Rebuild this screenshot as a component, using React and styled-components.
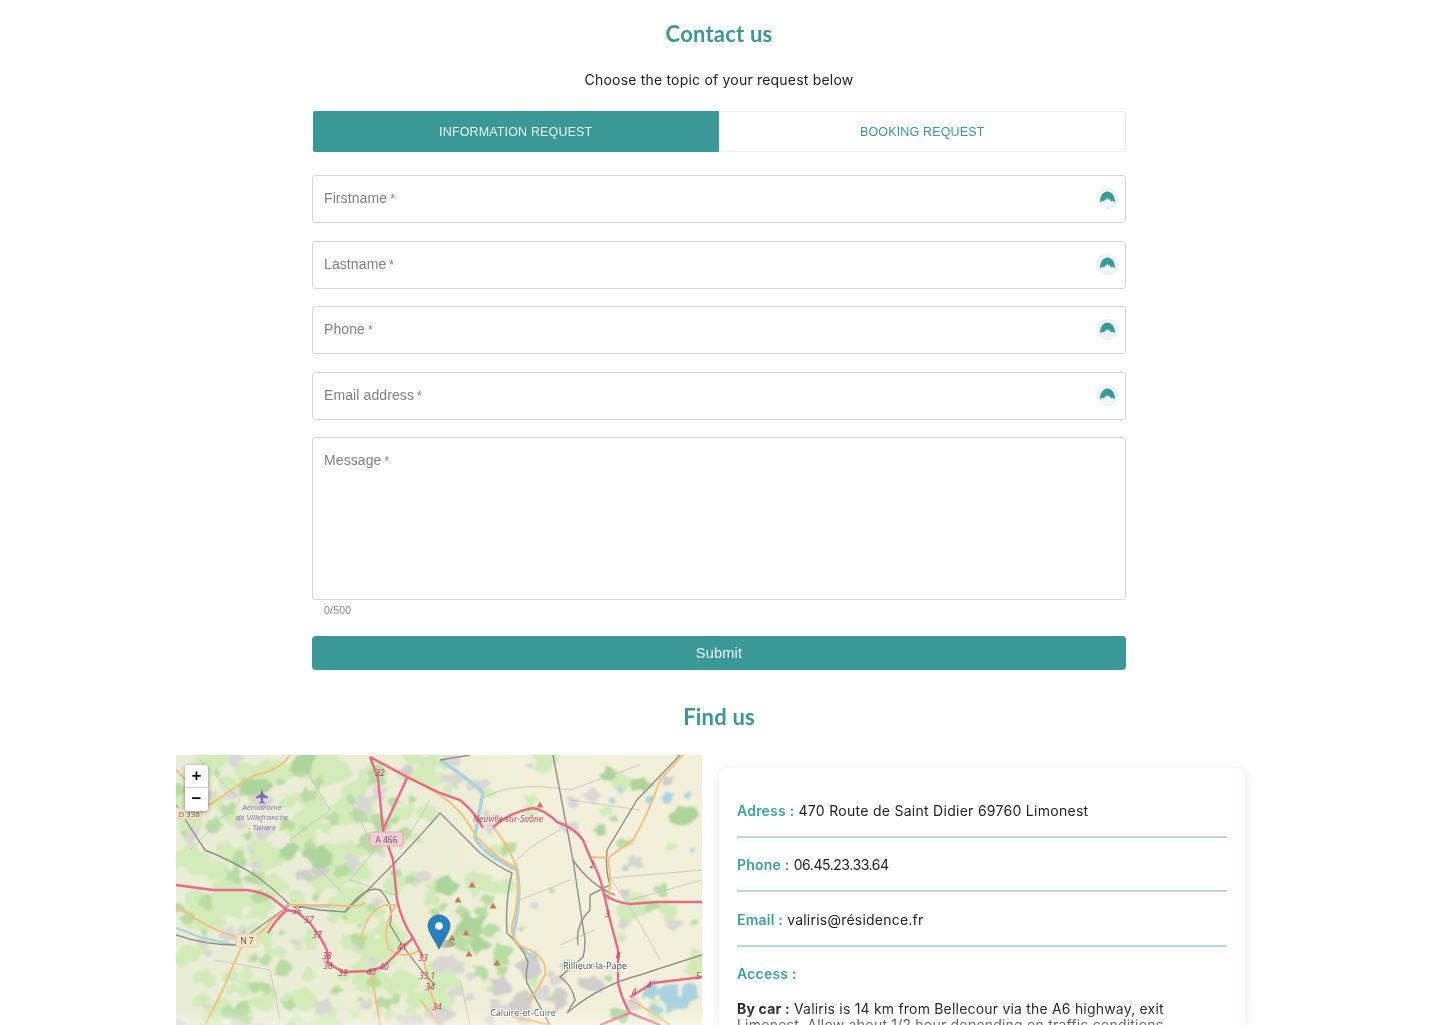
import React from 'react';
import styled, { createGlobalStyle } from 'styled-components';

const teal = '#3a9896';

const GlobalStyle = createGlobalStyle`
  html, body {
    margin: 0;
    padding: 0;
    background: #fff;
  }
  #root {
    height: 1025px;
    overflow: hidden;
  }
`;

const Page = styled.div`
  position: relative;
  height: 1025px;
  overflow: hidden;
  display: flex;
  flex-direction: column;
  align-items: center;
  padding: 20px 2px 0 0;
  box-sizing: border-box;
  font-family: 'Inter', sans-serif;
  filter: blur(0.3px);
  & > * {
    flex: none;
  }
`;

const Heading = styled.h2`
  margin: 0;
  height: 28px;
  line-height: 28px;
  font-family: 'Lato', sans-serif;
  font-size: 22px;
  font-weight: 700;
  letter-spacing: 0.2px;
  color: ${teal};
  text-align: center;
`;

const Subtitle = styled.p`
  margin: 21px 0 0;
  height: 22px;
  line-height: 22px;
  font-size: 14px;
  letter-spacing: 0.2px;
  color: #222;
`;

const Tabs = styled.div`
  display: flex;
  width: 813px;
  height: 41px;
  margin-top: 20px;
`;

const Tab = styled.button`
  flex: 1;
  padding: 0;
  font-family: 'Liberation Sans', sans-serif;
  font-size: 12.5px;
  letter-spacing: 0.15px;
  color: ${(p) => (p.$active ? '#e8f4f3' : teal)};
  background: ${(p) => (p.$active ? teal : '#fff')};
  border: 1px solid ${(p) => (p.$active ? teal : '#eeeeee')};
  border-radius: ${(p) => (p.$active ? '2px 0 0 2px' : '0 2px 2px 0')};
`;

const Form = styled.form`
  display: flex;
  flex-direction: column;
  gap: 17.6px;
  width: 814px;
  margin-top: 23px;
`;

const Field = styled.div`
  display: flex;
  align-items: ${(p) => (p.$multi ? 'flex-start' : 'center')};
  justify-content: space-between;
  height: ${(p) => (p.$multi ? '163px' : '48px')};
  padding: ${(p) => (p.$multi ? '14px 7px 0 11px' : '0 7px 1px 11px')};
  box-sizing: border-box;
  border: 1px solid #d6d6d6;
  border-radius: 3px;
`;

const Label = styled.span`
  font-family: 'Liberation Sans', sans-serif;
  font-size: 14px;
  line-height: 16px;
  letter-spacing: 0.1px;
  color: #808080;
`;

const Star = styled.span`
  margin-left: 3px;
  font-size: 12px;
`;

const Counter = styled.div`
  margin: -14px 0 0 12px;
  height: 12px;
  line-height: 12px;
  font-family: 'Liberation Sans', sans-serif;
  font-size: 10.5px;
  letter-spacing: 0.2px;
  color: #8a8a8a;
`;

const Submit = styled.button`
  height: 34px;
  margin-top: 2px;
  padding: 0;
  border: 0;
  border-radius: 4px;
  background: ${teal};
  color: #f2f8f8;
  font-family: 'Liberation Sans', sans-serif;
  font-size: 14.5px;
  letter-spacing: 0.2px;
`;

const FindHeading = styled(Heading)`
  margin-top: 33px;
`;

const Columns = styled.div`
  display: grid;
  grid-template-columns: 526px 526px;
  column-gap: 17px;
  align-self: flex-start;
  margin: 24px 0 0 176px;
`;

const MapBox = styled.div`
  position: relative;
  width: 526px;
  height: 300px;
  overflow: hidden;
  background: #f2efd9;
`;

const MapSvg = styled.svg`
  display: block;
  width: 526px;
  height: 300px;
  filter: blur(0.4px);
`;

const Zoom = styled.div`
  position: absolute;
  top: 10px;
  left: 9px;
  width: 23px;
  display: flex;
  flex-direction: column;
  border-radius: 3px;
  background: #fff;
  box-shadow: 0 1px 4px rgba(0, 0, 0, 0.4);
`;

const ZoomButton = styled.span`
  height: 22.5px;
  line-height: 22px;
  text-align: center;
  font-family: 'Liberation Sans', sans-serif;
  font-size: 17px;
  font-weight: 700;
  color: #111;
  & + & {
    border-top: 1px solid #ccc;
  }
`;

const Card = styled.div`
  margin-top: 13px;
  padding: 24px 18px 0;
  height: 300px;
  box-sizing: border-box;
  background: #fff;
  border-radius: 8px;
  box-shadow: 0 2px 10px rgba(30, 80, 80, 0.14);
`;

const Row = styled.div`
  height: 46px;
  padding-top: 8px;
  box-sizing: border-box;
  line-height: 22px;
  font-size: 14px;
  color: #222;
  letter-spacing: 0.22px;
  border-bottom: ${(p) => (p.$plain ? 'none' : '2px solid #b4dcdc')};
  margin-bottom: ${(p) => (p.$plain ? '0' : '8.5px')};
`;

const Key = styled.span`
  font-weight: 600;
  color: #3fa09d;
`;

const Value = styled.span`
  letter-spacing: ${(p) => p.$spacing || '0.22px'};
`;

const Paragraph = styled.p`
  margin: 0;
  font-size: 14px;
  line-height: 16px;
  letter-spacing: 0.2px;
  color: #222;
`;

const Fade = styled.div`
  position: absolute;
  left: 0;
  right: 0;
  bottom: 0;
  height: 18px;
  background: linear-gradient(rgba(255, 255, 255, 0), rgba(255, 255, 255, 0.35));
  pointer-events: none;
`;

const rnd = (seed) => {
  const n = Math.sin(seed * 12.9898) * 43758.5453;
  return n - Math.floor(n);
};

// irregular patch for the map, same seed gives the same shape
const blob = (cx, cy, r, seed) => {
  const pts = [];
  for (let i = 0; i < 10; i++) {
    const a = (i / 10) * Math.PI * 2;
    const k = 0.5 + rnd(seed * 3.1 + i * 7.7) * 0.9;
    pts.push(`${(cx + Math.cos(a) * r * k).toFixed(1)},${(cy + Math.sin(a) * r * k * 0.85).toFixed(1)}`);
  }
  return pts.join(' ');
};

// scatter of small fields, more of them on the western half of the map
const scatter = (count, seed, minR, maxR, keep) => {
  const out = [];
  for (let i = 0; i < count; i++) {
    const x = 176 + rnd(seed + i * 1.37) * 526;
    const y = 755 + rnd(seed + i * 2.71) * 280;
    if (keep(x, y, rnd(seed + i * 4.13))) {
      out.push([x, y, minR + rnd(seed + i * 5.9) * (maxR - minR)]);
    }
  }
  return out;
};

const fields2 = scatter(320, 11, 5, 17, (x, y, p) => (x < 450 ? p < 0.85 : p < 0.16));
const woods = scatter(260, 23, 3, 10, (x, y, p) => {
  if (x > 430 && x < 510 && y > 880 && y < 980) return p < 0.95;
  if (x < 400) return p < 0.6;
  return p < 0.1;
});
const towns = scatter(240, 37, 3, 10, (x, y, p) => {
  if (y > 960 && x > 430 && x < 620) return p < 0.95;
  if (x < 430) return p < 0.45;
  return p < 0.18;
});

const forestBig = [
  [255, 785, 14], [305, 762, 14], [318, 855, 13], [290, 850, 9], [445, 885, 12], [470, 925, 16], [480, 945, 10],
  [610, 775, 9], [642, 785, 10], [682, 815, 13], [600, 830, 6], [620, 1015, 9],
];

const townsBig = [
  [320, 870, 9], [305, 875, 8], [405, 772, 8], [530, 965, 14], [500, 985, 12], [520, 1005, 16], [560, 1000, 12],
  [590, 985, 12], [445, 1015, 12], [668, 780, 7], [625, 893, 6], [570, 965, 8],
];

const water = [
  [668, 797, 6], [650, 800, 5], [688, 795, 4], [612, 800, 4], [620, 790, 4], [692, 850, 3],
  [625, 868, 3], [650, 992, 12], [672, 1000, 14], [690, 992, 9], [655, 1010, 8],
];

const motorways = [
  'M176 885 L213 890 L247 890 Q262 892 272 898 L287 910',
  'M287 910 Q277 918 268 933',
  'M287 910 L297 912 L310 923 L320 937 L327 950 L328 963 L343 972 L370 971 L383 967 L403 947 L413 938',
  'M370 757 L407 777 L440 793 L460 800 Q475 812 483 828',
  'M378 778 L383 830 L407 778',
  'M378 778 L370 757',
  'M383 830 L393 860 L397 900 Q402 922 413 938 L423 957',
  'M493 827 Q510 812 533 808 Q545 810 557 822 Q575 828 583 840 L590 857 Q600 875 603 890 L610 920 L618 950 L618 983 Q622 1000 630 1013',
  'M603 893 Q612 902 630 904 L657 902 L702 902',
  'M630 997 L653 983 L702 977',
  'M600 1025 L630 1013 L660 1025',
];

const orangeRoads = [
  'M176 905 Q200 925 230 935 L245 940 Q262 935 272 920 L287 908',
  'M245 940 Q235 960 225 985 L205 1025',
  'M176 770 L210 805 Q230 790 255 775 Q280 770 290 755',
  'M423 957 L430 990 L437 1010',
  'M370 757 L400 772 L440 795 Q462 810 472 830 Q490 855 517 868',
  'M493 827 Q508 845 517 868 Q520 900 512 925 Q510 945 530 950 Q548 960 545 975 Q535 995 528 1000',
  'M608 858 Q612 880 608 900',
  'M608 858 L633 840 Q650 810 660 780 L683 755',
  'M590 857 L608 858',
  'M360 940 Q368 910 385 905 L396 905',
  'M396 905 Q380 930 390 950 Q405 960 420 950',
  'M370 972 Q375 990 380 1025',
  'M420 1000 L440 1025',
  'M287 905 L330 905 Q360 908 365 903',
  'M505 1015 L550 1025',
  'M630 1000 Q650 1010 670 1025',
];

const grayLines = [
  'M176 935 Q205 945 235 945 Q255 930 290 905 L320 910 L345 912 Q365 885 380 890 Q395 905 390 925 Q410 960 435 985',
  'M290 905 Q275 890 255 875 Q230 860 205 850 Q195 835 176 805',
  'M345 912 Q400 860 440 813 L480 853 Q500 868 512 873 Q505 900 507 933 Q525 950 528 963 Q525 975 527 983 L550 1025',
  'M553 755 L573 860 L585 940 Q585 950 583 957 L560 977 Q572 985 575 1000 L567 1013',
  'M607 850 L637 800 L680 755',
  'M607 850 Q605 870 610 885 L590 895 L590 910 Q575 925 578 945',
  'M573 860 Q590 885 615 895',
  'M567 1013 Q600 985 640 975 Q670 965 702 955',
  'M440 760 L470 755',
];

const thinLines = [
  'M480 800 Q510 780 570 790 L640 765', 'M560 830 Q520 850 510 870', 'M610 878 L702 870', 'M610 878 Q640 920 660 960',
  'M200 760 L240 800 L190 850', 'M300 760 L330 810 L290 840 L340 890', 'M350 800 L375 850 L350 880 L395 895', 'M215 960 L270 970 L280 1020',
  'M400 850 L430 800', 'M520 900 L570 880', 'M595 930 L560 945', 'M460 980 L470 1025', 'M630 900 L702 880', 'M570 800 L640 810',
];

const peaks = [[472, 885], [458, 900], [493, 906], [466, 933], [452, 938], [469, 954], [497, 963], [540, 805]];

const highwayNumbers = [
  ['32', 380, 776], ['36', 297, 914], ['37', 309, 923], ['37', 317, 938], ['38', 327, 959], ['38', 328, 969],
  ['39', 343, 976], ['40', 371, 975], ['40', 384, 970], ['41', 402, 950], ['33', 423, 961], ['33.1', 427, 979],
  ['34', 430, 990], ['34', 437, 1010], ['2', 592, 868], ['3', 607, 917], ['4', 618, 959], ['4', 634, 995], ['4', 649, 988], ['5', 698, 979],
];

const patches = (list, fill, offset) =>
  list.map(([x, y, r], i) => <polygon key={`${offset}-${i}`} points={blob(x, y, r, i + offset)} fill={fill} />);

const MapDrawing = () => (
  <MapSvg viewBox="176 755 526 300" aria-hidden="true">
    <defs>
      <linearGradient id="ground" x1="0" x2="1" y1="0" y2="0">
        <stop offset="0" stopColor="#e9edd6" />
        <stop offset="0.45" stopColor="#ebedd4" />
        <stop offset="0.7" stopColor="#f2f0da" />
      </linearGradient>
      <filter id="soft"><feGaussianBlur stdDeviation="0.9" /></filter>
    </defs>
    <rect x="176" y="755" width="526" height="300" fill="url(#ground)" />
    <g filter="url(#soft)">
      {patches(fields2, '#d3ebb9', 1)}
      {patches(towns, '#d9d7d4', 500)}
      {patches(townsBig, '#d0cecd', 900)}
      {patches(woods, '#b9dca3', 1000)}
      {patches(forestBig, '#add49b', 1400)}
      {patches(water, '#aad3df', 1600)}
    </g>
    <path d="M440 760 Q470 780 483 793 Q478 815 475 837 Q480 852 517 870 Q522 895 513 937 Q520 950 535 958" fill="none" stroke="#aad3df" strokeWidth="3.5" />
    <path d="M176 928 L200 937 L235 945 L245 930 M285 905 L330 907" fill="none" stroke="#aad3df" strokeWidth="2" />
    {thinLines.map((d, i) => (
      <path key={i} d={d} fill="none" stroke="#c4c4bd" strokeWidth="0.9" />
    ))}
    {grayLines.map((d, i) => (
      <path key={i} d={d} fill="none" stroke="#8f8f8a" strokeWidth="1.4" />
    ))}
    {orangeRoads.map((d, i) => (
      <path key={i} d={d} fill="none" stroke="#f6bd78" strokeWidth="1.8" />
    ))}
    {motorways.map((d, i) => (
      <path key={i} d={d} fill="none" stroke="#e8698a" strokeWidth="2.4" />
    ))}
    {peaks.map(([x, y], i) => (
      <polygon key={i} points={`${x},${y - 3.5} ${x + 3.5},${y + 2.5} ${x - 3.5},${y + 2.5}`} fill="#c77d4b" />
    ))}
    {highwayNumbers.map(([t, x, y], i) => (
      <text key={i} x={x} y={y} fontFamily="Open Sans, sans-serif" fontSize="8.5" fontStyle="italic" textAnchor="middle" fill="#b83a60">{t}</text>
    ))}
    <rect x="170" y="808" width="32" height="11" rx="1.5" fill="#f6e6c8" stroke="#e6d2a8" />
    <text x="189" y="817" fontFamily="Open Sans, sans-serif" fontSize="8" textAnchor="middle" fill="#666">D 338</text>
    <rect x="236" y="934" width="22" height="13" rx="1.5" fill="#f6e3c4" stroke="#e6cfa4" />
    <text x="247" y="944" fontFamily="Open Sans, sans-serif" fontSize="8.5" textAnchor="middle" fill="#555">N 7</text>
    <rect x="370" y="832" width="33" height="14" rx="1.5" fill="#f2ccd6" stroke="#e2aab8" />
    <text x="386.5" y="843" fontFamily="Open Sans, sans-serif" fontSize="8.5" textAnchor="middle" fill="#555">A 466</text>
    <g fill="#7d6bbd" fontFamily="Open Sans, sans-serif" fontSize="8" fontStyle="italic" textAnchor="middle">
      <path d="M262 789 L263.5 794 L268 797 L268 798.5 L263.5 797.5 L263 801 L265 803 L265 804 L262 803 L259 804 L259 803 L261 801 L260.5 797.5 L256 798.5 L256 797 L260.5 794 Z" />
      <text x="262" y="810">Aérodrome</text>
      <text x="262" y="820">de Villefranche</text>
      <text x="262" y="830">- Tarare</text>
    </g>
    <text x="508" y="822" fontFamily="Open Sans, sans-serif" fontSize="8.5" fontStyle="italic" textAnchor="middle" fill="#b83a60">Neuville-sur-Saône</text>
    <text x="595" y="969" fontFamily="Open Sans, sans-serif" fontSize="9" textAnchor="middle" fill="#444" stroke="#fff" strokeWidth="2" paintOrder="stroke">Rillieux-la-Pape</text>
    <text x="523" y="1016" fontFamily="Open Sans, sans-serif" fontSize="9" textAnchor="middle" fill="#444" stroke="#fff" strokeWidth="2" paintOrder="stroke">Caluire-et-Cuire</text>
    <ellipse cx="446" cy="944" rx="9" ry="4" fill="#000" opacity="0.18" />
    <path d="M439 915 C432.5 915 428 920 428 926 C428 932 436 942 439 949 C442 942 450 932 450 926 C450 920 445.5 915 439 915 Z" fill="#2a7fc0" stroke="#23659a" strokeWidth="0.7" />
    <circle cx="439" cy="926" r="3.8" fill="#fff" />
  </MapSvg>
);

const PassIcon = () => (
  <svg width="21" height="21" viewBox="0 0 21 21" aria-hidden="true">
    <circle cx="10.5" cy="10.5" r="10" fill="#f0f6f6" stroke="#e3eded" strokeWidth="1" />
    <path
      d="M3.2 14.5 C2.6 8.5 6 3.5 10.5 3.5 C15 3.5 18.4 8.5 17.8 14.5 L15.2 12.5 L14 13.8 L12.8 11 L11.8 12 L10.5 9.5 L9.2 12 L8.2 11 L7 13.8 L5.8 12.5 Z"
      fill="#3a9896"
    />
  </svg>
);

const fields = ['Firstname', 'Lastname', 'Phone', 'Email address'];

const App = () => (
  <>
    <GlobalStyle />
    <Page>
      <Heading>Contact us</Heading>
      <Subtitle>Choose the topic of your request below</Subtitle>
      <Tabs>
        <Tab type="button" $active>INFORMATION REQUEST</Tab>
        <Tab type="button">BOOKING REQUEST</Tab>
      </Tabs>
      <Form>
        {fields.map((name) => (
          <Field key={name}>
            <Label>{name}<Star>*</Star></Label>
            <PassIcon />
          </Field>
        ))}
        <Field $multi>
          <Label>Message<Star>*</Star></Label>
        </Field>
        <Counter>0/500</Counter>
        <Submit type="button">Submit</Submit>
      </Form>
      <FindHeading>Find us</FindHeading>
      <Columns>
        <MapBox>
          <MapDrawing />
          <Zoom>
            <ZoomButton>+</ZoomButton>
            <ZoomButton>−</ZoomButton>
          </Zoom>
        </MapBox>
        <Card>
          <Row><Key>Adress :</Key> <Value $spacing="0.28px">470 Route de Saint Didier 69760 Limonest</Value></Row>
          <Row><Key>Phone :</Key> <Value $spacing="-0.45px">06.45.23.33.64</Value></Row>
          <Row><Key>Email :</Key> <Value>valiris@résidence.fr</Value></Row>
          <Row $plain><Key>Access :</Key></Row>
          <Paragraph>
            <strong>By car :</strong> Valiris is 14 km from Bellecour via the A6 highway, exit Limonest. Allow about 1/2 hour depending on traffic conditions.
          </Paragraph>
        </Card>
      </Columns>
      <Fade />
    </Page>
  </>
);

export default App;
